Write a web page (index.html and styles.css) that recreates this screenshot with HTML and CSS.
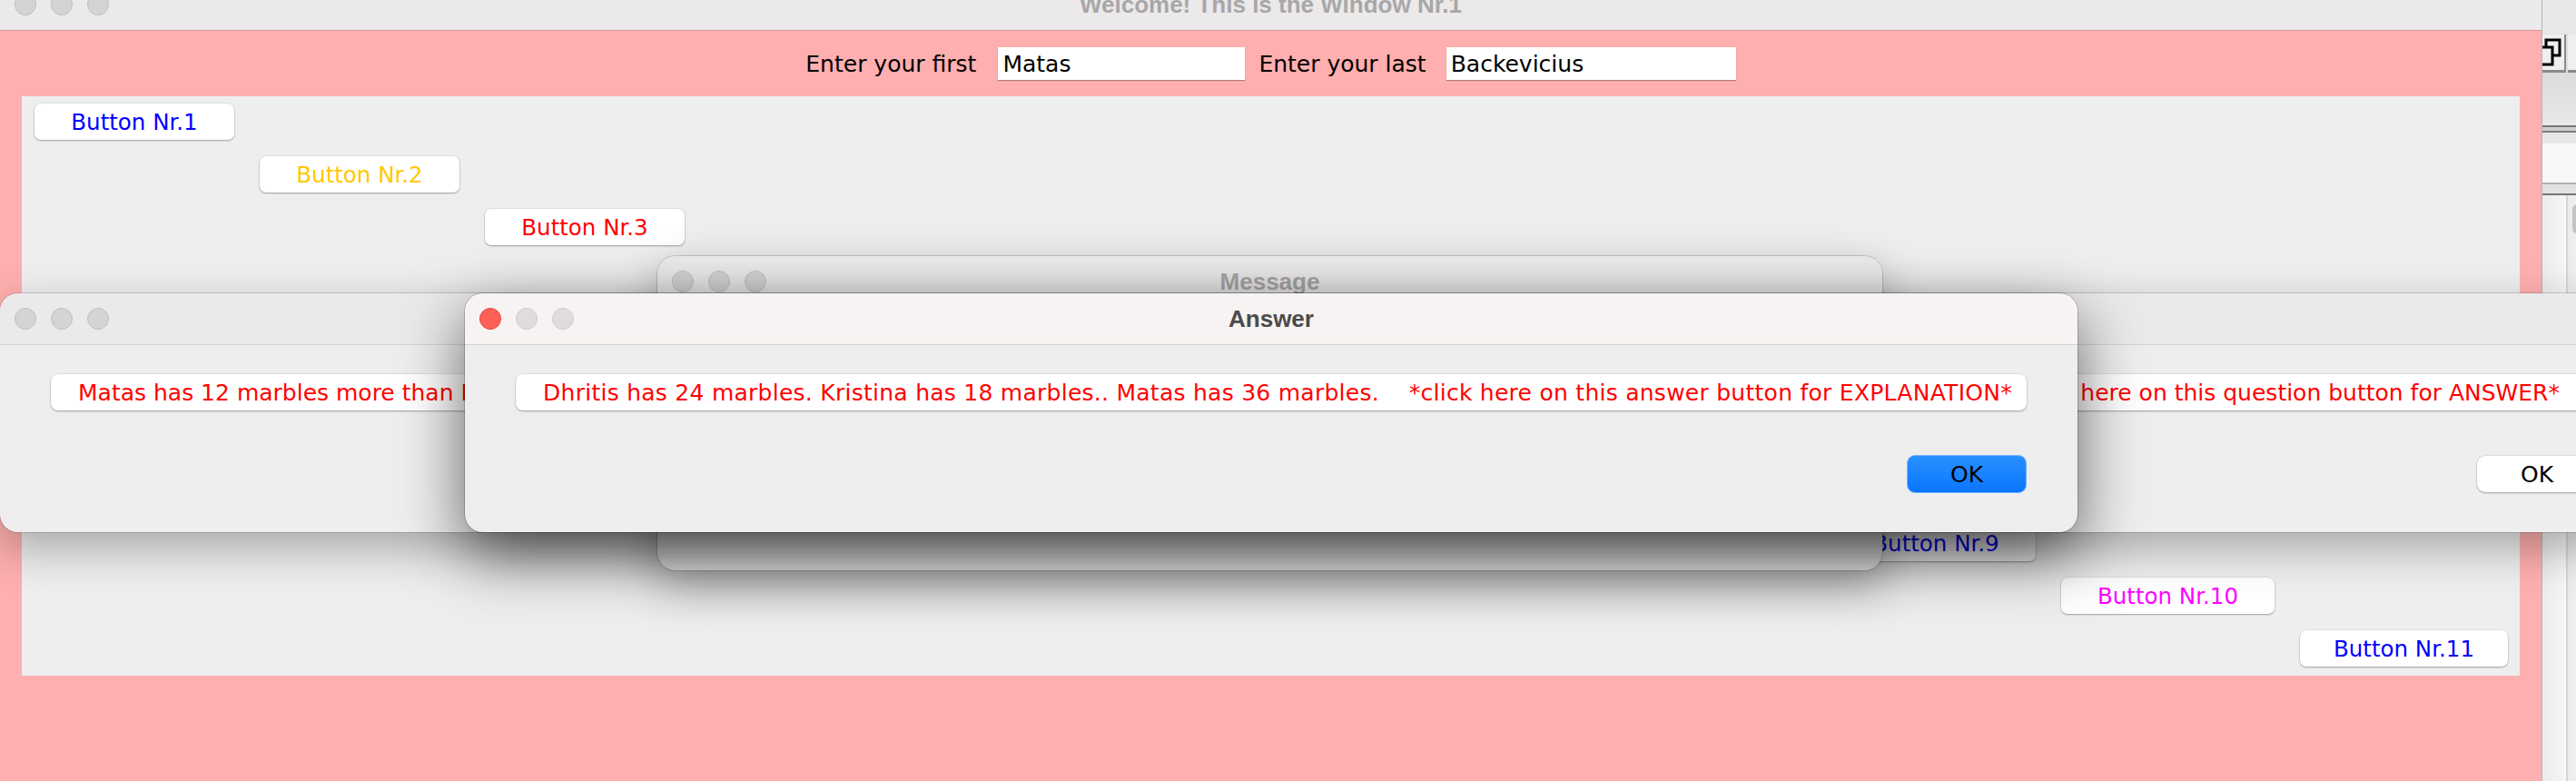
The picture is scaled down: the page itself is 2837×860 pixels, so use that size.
FILE: index.html
```html
<!DOCTYPE html>
<html lang="en">
<head>
    <meta charset="UTF-8">
    <meta name="viewport" content="width=device-width, initial-scale=1.0">
    <title>Welcome! This is the Window Nr.1</title>
    <link rel="stylesheet" href="styles.css">
</head>
<body>
    <div class="desktop">

        <!-- window behind, only its left strip shows -->
        <div class="window side-window">
            <div class="side-title"></div>
            <div class="side-toolbar">
                <div class="side-tool">
                    <svg width="26" height="40" viewBox="0 0 26 40">
                        <rect x="4" y="6" width="15" height="17" fill="none" stroke="#000" stroke-width="3"/>
                        <rect x="-3" y="14" width="14" height="19" fill="#efefef" stroke="#000" stroke-width="3"/>
                    </svg>
                </div>
                <div class="side-tool"></div>
            </div>
            <div class="side-gap"></div>
            <div class="side-rule"></div>
            <div class="side-field"></div>
            <div class="side-rule light-rule"></div>
            <div class="side-list">
                <div class="side-col"></div>
                <div class="side-col"><span class="side-knob"></span></div>
            </div>
        </div>

        <div class="window main-window">
            <div class="titlebar">
                <div class="lights">
                    <span class="light"></span>
                    <span class="light"></span>
                    <span class="light"></span>
                </div>
                <div class="title">Welcome! This is the Window Nr.1</div>
            </div>

            <div class="name-row">
                <label class="name-label first-label" for="first">Enter your first</label>
                <input class="field field-first" id="first" type="text" value="Matas">
                <label class="name-label last-label" for="last">Enter your last</label>
                <input class="field field-last" id="last" type="text" value="Backevicius">
            </div>

            <div class="button-panel">
                <button class="step-btn blue">Button Nr.1</button>
                <button class="step-btn orange">Button Nr.2</button>
                <button class="step-btn red">Button Nr.3</button>
                <button class="step-btn green">Button Nr.4</button>
                <button class="step-btn blue">Button Nr.5</button>
                <button class="step-btn orange">Button Nr.6</button>
                <button class="step-btn red">Button Nr.7</button>
                <button class="step-btn magenta">Button Nr.8</button>
                <button class="step-btn blue">Button Nr.9</button>
                <button class="step-btn magenta">Button Nr.10</button>
                <button class="step-btn blue">Button Nr.11</button>
            </div>
        </div>

        <div class="window dialog message-dialog">
            <div class="titlebar">
                <div class="lights">
                    <span class="light"></span>
                    <span class="light"></span>
                    <span class="light"></span>
                </div>
                <div class="title">Message</div>
            </div>
            <div class="dialog-body"></div>
        </div>

        <div class="window dialog question-dialog">
            <div class="titlebar">
                <div class="lights">
                    <span class="light"></span>
                    <span class="light"></span>
                    <span class="light"></span>
                </div>
                <div class="title">Question</div>
            </div>
            <div class="dialog-body">
                <button class="text-btn question-btn">
                    <span>Matas has 12 marbles more than Dhritis.</span>
                    <span>*click here on this question button for ANSWER*</span>
                </button>
                <div class="ok-row">
                    <button class="ok-btn plain">OK</button>
                </div>
            </div>
        </div>

        <div class="window dialog answer-dialog">
            <div class="titlebar">
                <div class="lights">
                    <span class="light close"></span>
                    <span class="light off"></span>
                    <span class="light off"></span>
                </div>
                <div class="title">Answer</div>
            </div>
            <div class="dialog-body">
                <button class="text-btn answer-btn">Dhritis has 24 marbles. Kristina has 18 marbles.. Matas has 36 marbles.    *click here on this answer button for EXPLANATION*</button>
                <div class="ok-row">
                    <button class="ok-btn default">OK</button>
                </div>
            </div>
        </div>

    </div>
</body>
</html>
```

FILE: styles.css
```css
* {
    box-sizing: border-box;
}

body {
    margin: 0;
    width: 2837px;
    height: 860px;
    overflow: hidden;
    background: #ececec;
    font-family: "DejaVu Sans", sans-serif;
    font-size: 25px;
}

.desktop {
    position: relative;
    width: 2837px;
    height: 860px;
    overflow: hidden;
}

.window {
    position: absolute;
}

/* title bars */

.titlebar {
    display: grid;
    grid-template-columns: 1fr auto 1fr;
    align-items: center;
    height: 57px;
    background: #ebe9ea;
    border-bottom: 1px solid #d4d2d2;
}

.lights {
    display: flex;
    gap: 16px;
    padding-left: 16px;
}

.light {
    width: 24px;
    height: 24px;
    border-radius: 50%;
    background: #d5d3d3;
    border: 1px solid #c1bfbf;
}

.light.close {
    background: #fe5f57;
    border-color: #e1463f;
}

.light.off {
    background: #dedcdc;
    border-color: #cecccc;
}

.title {
    font-family: "Liberation Sans", Arial, sans-serif;
    font-weight: bold;
    font-size: 26px;
    color: #a8a7a7;
}

/* main window */

.main-window {
    left: 0;
    top: -23px;
    width: 2800px;
    height: 900px;
    background: #ffafaf;
    border-right: 1px solid #b5b3b3;
}

.main-window .titlebar {
    border-bottom-color: #e0979a;
}

.name-row {
    display: flex;
    justify-content: center;
    align-items: center;
    height: 72px;
}

.name-label {
    color: #000;
}

.first-label {
    margin-right: 24px;
}

.last-label {
    margin-right: 22px;
}

.field {
    height: 36px;
    padding: 0 5px;
    border: none;
    background: #fff;
    font: inherit;
    color: #000;
    box-shadow: 0 1px 1px rgba(0, 0, 0, 0.3);
    outline: none;
}

.field-first {
    width: 272px;
    margin-right: 15px;
}

.field-last {
    width: 319px;
}

.button-panel {
    display: grid;
    grid-template-columns: repeat(9, 220px) 235px 229px;
    grid-template-rows: repeat(11, 40px);
    gap: 18px 28px;
    margin: 0 24px;
    padding: 8px 14px 10px;
    background: #eeeeee;
}

.step-btn {
    padding: 0;
    border: none;
    border-radius: 7px;
    background: #fff;
    font: inherit;
    font-size: 24.5px;
    box-shadow: 0 1px 2px rgba(0, 0, 0, 0.3), 0 0 0 0.5px rgba(0, 0, 0, 0.1);
}

.step-btn:nth-child(1) { grid-area: 1 / 1; }
.step-btn:nth-child(2) { grid-area: 2 / 2; }
.step-btn:nth-child(3) { grid-area: 3 / 3; }
.step-btn:nth-child(4) { grid-area: 4 / 4; }
.step-btn:nth-child(5) { grid-area: 5 / 5; }
.step-btn:nth-child(6) { grid-area: 6 / 6; }
.step-btn:nth-child(7) { grid-area: 7 / 7; }
.step-btn:nth-child(8) { grid-area: 8 / 8; }
.step-btn:nth-child(9) { grid-area: 9 / 9; }
.step-btn:nth-child(10) { grid-area: 10 / 10; }
.step-btn:nth-child(11) { grid-area: 11 / 11; }

.blue { color: #0000ff; }
.orange { color: #ffc800; }
.red { color: #ff0000; }
.green { color: #00a000; }
.magenta { color: #ff00ff; }

/* dialogs */

.dialog {
    border-radius: 20px;
    overflow: hidden;
    background: #eeeeee;
}

.message-dialog {
    left: 724px;
    top: 282px;
    width: 1349px;
    height: 346px;
    box-shadow: 0 0 0 1px rgba(0, 0, 0, 0.15), 0 18px 50px rgba(0, 0, 0, 0.3);
}

.question-dialog {
    left: 0;
    top: 323px;
    width: 2916px;
    height: 263px;
    box-shadow: 0 0 0 1px rgba(0, 0, 0, 0.15), 0 18px 50px rgba(0, 0, 0, 0.3);
}

.answer-dialog {
    left: 512px;
    top: 323px;
    width: 1776px;
    height: 263px;
    box-shadow: 0 0 0 1px rgba(0, 0, 0, 0.2), 0 26px 70px rgba(0, 0, 0, 0.6);
}

.answer-dialog .titlebar {
    background: #f6f3f2;
}

.answer-dialog .title {
    color: #4b4a4a;
}

.dialog-body {
    display: flex;
    flex-direction: column;
    padding: 32px 56px 0;
}

.text-btn {
    display: flex;
    align-items: center;
    justify-content: center;
    height: 40px;
    padding: 0;
    border: none;
    border-radius: 8px;
    background: #fff;
    color: #ff0000;
    font: inherit;
    white-space: pre;
    box-shadow: 0 1px 2px rgba(0, 0, 0, 0.3), 0 0 0 0.5px rgba(0, 0, 0, 0.1);
}

.answer-btn {
    padding-left: 14px;
    letter-spacing: 0.26px;
}

.question-btn {
    justify-content: space-between;
    padding: 0 41px 0 30px;
}

.ok-row {
    display: flex;
    justify-content: flex-end;
    margin-top: 49px;
}

.ok-btn {
    width: 132px;
    height: 42px;
    padding: 0;
    border-radius: 9px;
    font: inherit;
    color: #000;
}

.ok-btn.default {
    border: 1px solid #74b4ff;
    background: linear-gradient(#2990ff, #0a76ff);
}

.ok-btn.plain {
    height: 40px;
    margin-top: 1px;
    border: none;
    background: #fff;
    box-shadow: 0 1px 2px rgba(0, 0, 0, 0.3), 0 0 0 0.5px rgba(0, 0, 0, 0.1);
}

/* side window */

.side-window {
    left: 2800px;
    top: 0;
    width: 60px;
    height: 860px;
    display: flex;
    flex-direction: column;
    background: linear-gradient(90deg, #e2e2e2, #f3f3f3);
}

.side-title {
    height: 38px;
    background: #e8e6e6;
}

.side-toolbar {
    display: flex;
    gap: 2px;
    height: 42px;
    background: #dedede;
}

.side-tool {
    width: 26px;
    height: 42px;
    background: #efefef;
    border-right: 2px solid #8a8a8a;
    border-bottom: 3px solid #8a8a8a;
}

.side-gap {
    height: 58px;
    background: linear-gradient(#dcdcdc, #e8e8e8);
}

.side-rule {
    height: 8px;
    border-top: 2px solid #777;
    border-bottom: 2px solid #7a7a7a;
    background: #cfcfcf;
}

.side-field {
    height: 55px;
    background: linear-gradient(#e6e6e6 0 12px, #f8f8f8 12px);
}

.light-rule {
    height: 14px;
    border-top-color: #b0b0b0;
    border-bottom-color: #777;
    background: #e2e2e2;
}

.side-list {
    display: flex;
    flex: 1;
}

.side-col {
    width: 28px;
    border-right: 2px solid #d6d6d6;
    background: linear-gradient(90deg, #ebebeb, #f6f6f6);
}

.side-knob {
    display: block;
    width: 10px;
    height: 32px;
    margin: 10px 0 0 5px;
    border-radius: 6px;
    background: #c4c4c4;
}
```
